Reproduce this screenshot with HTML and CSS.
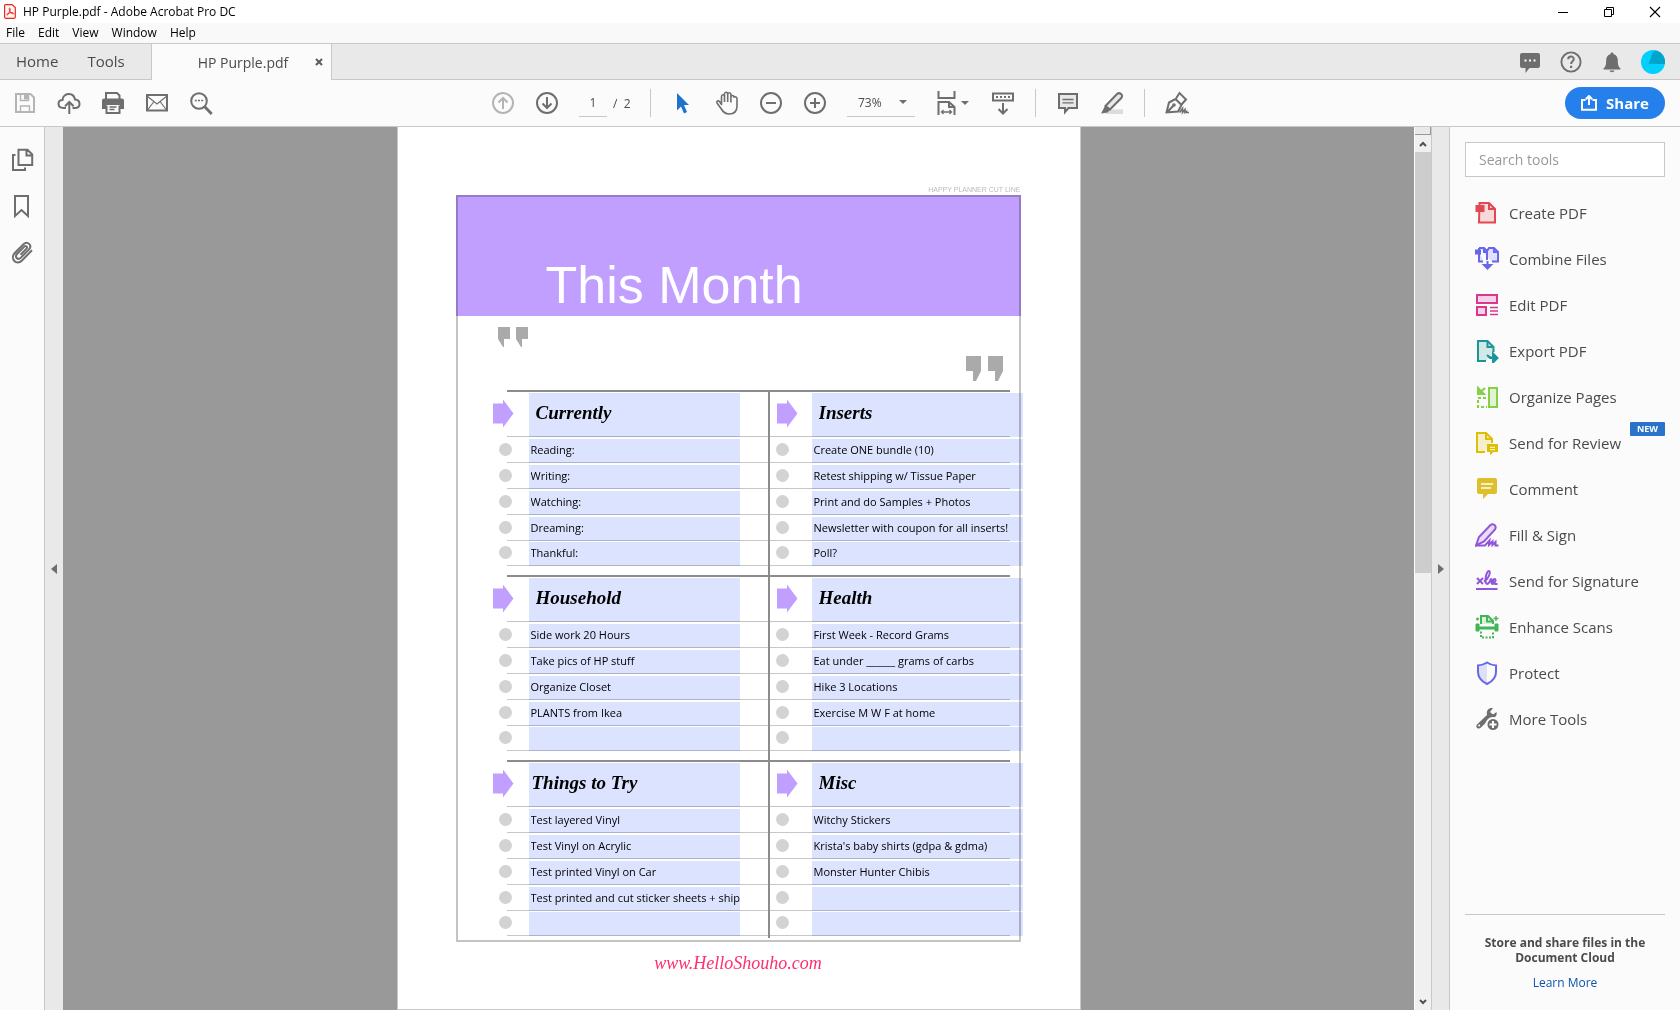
FILE: index.html
```html
<!DOCTYPE html>
<html lang="en">
<head>
<meta charset="utf-8">
<title>HP Purple.pdf - Adobe Acrobat Pro DC</title>
<link rel="stylesheet" href="styles.css">
</head>
<body>
<div class="app">
  <header class="titlebar">
    <svg class="logo" viewBox="0 0 12 15"><path d="M1.500.6h6.600l3.200 3v9.300q0 1.500-1.500 1.500H2.100Q.6 14.400.6 12.900V1.500Q.6.6 1.500.6z" fill="#fff5f5" stroke="#e8291c" stroke-width="1.200"/><path d="M5.700 4.200c-.9 0-.4 2 .4 3.400.9 1.500 2.300 2.400 3.300 2.200 1-.3-.3-1.300-2.400-1.100-2 .2-3.600.9-4.100 1.600-.4.800.7 1 1.400-.2.900-1.400 1.900-3.400 1.900-4.800 0-.7-.2-1.100-.5-1.100z" fill="none" stroke="#e8291c" stroke-width="1"/></svg>
    <h1>HP Purple.pdf - Adobe Acrobat Pro DC</h1>
    <div class="window-buttons">
      <button type="button" aria-label="Minimize"><svg viewBox="0 0 12 12"><path d="M1 6.500h10" stroke="#000"/></svg></button>
      <button type="button" aria-label="Restore"><svg viewBox="0 0 12 12"><path d="M1.500 3.500h7v7h-7zM3.500 3V1.500h7v7H9" fill="none" stroke="#000"/></svg></button>
      <button type="button" aria-label="Close"><svg viewBox="0 0 12 12"><path d="M1 1l10 10M11 1L1 11" stroke="#000" stroke-width="1.100"/></svg></button>
    </div>
  </header>

  <nav class="menubar" aria-label="Menu">
    <button type="button">File</button><button type="button">Edit</button><button type="button">View</button><button type="button">Window</button><button type="button">Help</button>
  </nav>

  <div class="tabs">
    <button type="button" class="tab-link">Home</button>
    <button type="button" class="tab-link">Tools</button>
    <div class="doc-tab"><span>HP Purple.pdf</span><button type="button" aria-label="Close tab"><svg viewBox="0 0 8 8"><path d="M1 1l6 6M7 1L1 7" stroke="#5c5c5c" stroke-width="2"/></svg></button></div>
    <div class="account">
      <button type="button" aria-label="Messages"><svg viewBox="0 0 24 24"><path d="M4 3h16q2 0 2 2v11q0 2-2 2h-8.500L7.500 23v-5H4q-2 0-2-2V5q0-2 2-2z" fill="#6e6e6e"/><path d="M6.500 10.500h2m2.500 0h2m2.500 0h2" stroke="#fff" stroke-width="2"/></svg></button>
      <button type="button" aria-label="Help"><svg viewBox="0 0 24 24"><circle cx="12" cy="12" r="9.600" fill="none" stroke="#6e6e6e" stroke-width="1.900"/><path d="M9.200 9.300c0-3.700 5.600-3.400 5.600-.3 0 2.300-2.700 2.200-2.700 5" fill="none" stroke="#6e6e6e" stroke-width="2"/><path d="M11 15.800h2.200V18H11z" fill="#6e6e6e"/></svg></button>
      <button type="button" aria-label="Notifications"><svg viewBox="0 0 24 24"><path d="M12 2.500c1 0 1.600.7 1.600 1.700 3 .8 4.200 3 4.200 6 0 4.500.6 6.500 2.700 8.300v1h-17v-1c2.100-1.800 2.700-3.800 2.700-8.300 0-3 1.200-5.200 4.200-6 0-1 .6-1.700 1.600-1.700zM9.500 20.500h5c-.6 2.200-4.400 2.200-5 0z" fill="#6e6e6e"/></svg></button>
      <button type="button" aria-label="Account"><svg viewBox="0 0 24 24"><circle cx="12" cy="12" r="12" fill="#00cfff"/><path d="M7.500 14L12 2l3-1.600A12 12 0 0 1 23.900 14z" fill="#00a5cc"/></svg></button>
    </div>
  </div>

  <div class="toolbar">
    <div class="tool-group file-tools">
      <button type="button" class="tool off" aria-label="Save"><svg viewBox="0 0 24 24"><path d="M3 3h14.500L21 6.500V21H3z"/><path d="M7.500 3v6.500h8V3M7.500 21v-6h9v6" stroke-width="1.400"/><path d="M12 4.500h2v3h-2z" class="solid"/></svg></button>
      <button type="button" class="tool" aria-label="Upload"><svg viewBox="0 0 24 24"><path d="M9 17H6.500C-.5 17 .5 8.500 5.500 9 6 1.500 16.500.5 18 8.500c6 .5 6 8.500 0 8.500h-2.500"/><path d="M12.300 23V11.500M8 15.200l4.300-4.300 4.300 4.300"/></svg></button>
      <button type="button" class="tool" aria-label="Print"><svg viewBox="0 0 24 24"><path d="M5 8V2h11l2.500 2.500V8" /><path d="M3 7.500h18q2 0 2 2V18h-4v-4H5v4H1V9.500q0-2 2-2z" class="solid" stroke="none"/><path d="M5.500 14.500V22h13v-7.500"/><path d="M8.500 16h7M8.500 18.500h5" stroke-width="1.300"/></svg></button>
      <button type="button" class="tool" aria-label="Mail"><svg viewBox="0 0 24 24"><path d="M2 4h20v15.500H2z"/><path d="M2 5l10 8 10-8M2.500 19l6.500-8.500M21.500 19L15 10.500" stroke-width="1.200"/></svg></button>
      <button type="button" class="tool" aria-label="Search"><svg viewBox="0 0 24 24"><circle cx="10" cy="10" r="7.800"/><path d="M15.700 15.700L22.700 23" stroke-width="2.800"/><path d="M5.800 9.500h2m1.200 0h2m1.200 0h2" stroke-width="1.700"/></svg></button>
    </div>

    <div class="tool-group">
      <button type="button" class="tool off" aria-label="Previous page"><svg viewBox="0 0 24 24"><circle cx="12" cy="12" r="10"/><path d="M12 18V7M7.500 11.500L12 7l4.500 4.500"/></svg></button>
      <button type="button" class="tool" aria-label="Next page"><svg viewBox="0 0 24 24"><circle cx="12" cy="12" r="10"/><path d="M12 6v11M7.500 12.500L12 17l4.500-4.500"/></svg></button>
      <input class="page-number" aria-label="Page number" value="1">
      <span class="page-total">/&nbsp; 2</span>
      <i class="sep"></i>
      <button type="button" class="tool" aria-label="Select"><svg viewBox="0 0 24 24"><path d="M6 2l12 12h-5l3 7-3 1.500L10 15.500 6 19.500z" fill="#2172cc" stroke="none"/></svg></button>
      <button type="button" class="tool" aria-label="Hand"><svg viewBox="0 0 24 24"><path d="M6.500 14V5.500q0-1.700 1.500-1.700t1.500 1.700V11 3q0-1.700 1.600-1.700T12.700 3v8V3.500q0-1.700 1.600-1.700t1.600 1.700V11.500 6q0-1.500 1.500-1.500T19 6c2.500-.5 3 .500 3 2v7c0 5-3 8-8 8-4 0-6-2-8-5.500L2 12c-.9-1.800 1.300-3 2.500-1.500L7 14" stroke-width="1.600"/></svg></button>
      <button type="button" class="tool" aria-label="Zoom out"><svg viewBox="0 0 24 24"><circle cx="12" cy="12" r="10"/><path d="M7 12h10"/></svg></button>
      <button type="button" class="tool" aria-label="Zoom in"><svg viewBox="0 0 24 24"><circle cx="12" cy="12" r="10"/><path d="M7 12h10M12 7v10"/></svg></button>
      <button type="button" class="zoom-level">73%<span class="caret"></span></button>
      <button type="button" class="tool fit" aria-label="Fit width"><svg viewBox="0 0 24 24"><path d="M3.500 0v7h16V0M3.500 24V11h10.500l5.500 5V24M14 11v5h5.500"/><path d="M6.500 21h10M8.500 19l-2 2 2 2M14.500 19l2 2-2 2" stroke-width="1.300"/></svg><span class="caret"></span></button>
      <button type="button" class="tool scroll" aria-label="Scroll"><svg viewBox="0 0 24 24"><path d="M2 2.500h20v7H2z"/><path d="M5 6h2m2 0h2m2 0h2m2 0h2" stroke-width="1.800"/><path d="M12 12v10M7.500 18l4.500 4.500 4.500-4.500"/></svg></button>
      <i class="sep"></i>
      <button type="button" class="tool" aria-label="Comment"><svg viewBox="0 0 24 24"><path d="M3 3h18v14h-8.500L9 21v-4H3z" fill="#e8e8e8"/><path d="M6.500 8.500h11M6.500 11.800h11" stroke-width="1.300"/></svg></button>
      <button type="button" class="tool highlight" aria-label="Highlight"><svg viewBox="0 0 24 24"><path d="M9 18.500h14V23H5z" fill="#dcdcdc" stroke="none"/><path d="M5.500 15L17 3q2-1.700 4 0t.3 4L10 18.500z" fill="#e8e8e8"/><path d="M5 15l5 4-2.500 2.500L1 22.500z" class="solid" stroke="none"/></svg></button>
      <i class="sep"></i>
      <button type="button" class="tool" aria-label="Sign"><svg viewBox="0 0 24 24"><path d="M1.500 21.500L4 11.500 10.500 8l6 6-3.500 6.500zM2 21.500l6.500-7M11 7.500L14.500 2l6.500 6.500-4.500 5"/><circle cx="9" cy="14" r=".8" class="solid"/><path d="M14.500 21.500l3-4v4l2.500-3v3l1.500-1v1H24" stroke-width="1.600"/></svg></button>
    </div>

    <button type="button" class="share"><svg viewBox="0 0 16 16"><path d="M4.500 5H1v9.800h14V5h-3.500M8 10V1.500M4.800 4.200L8 1l3.200 3.200" fill="none" stroke="#fff" stroke-width="2"/></svg>Share</button>
  </div>

  <div class="workspace">
    <aside class="rail">
      <button type="button" class="tool" aria-label="Page thumbnails"><svg viewBox="0 0 24 24"><path d="M8.500 1.800h9l4.700 4.700V17H8.500zM16.500 1.800v5.700h5.700M5.500 7H3v15h12v-2.500"/></svg></button>
      <button type="button" class="tool" aria-label="Bookmarks"><svg viewBox="0 0 24 24"><path d="M5 2h13v20l-6.500-6L5 22z"/></svg></button>
      <button type="button" class="tool" aria-label="Attachments"><svg viewBox="0 0 24 24"><path d="M10.500 14.800l6-6.200c1.500-1.600-.7-3.500-2.200-2L7 14c-3 3.300 1 6.500 4 3.600l8-8.200c3.600-4-1.500-9-5.500-5.200L4.800 13C-.5 18.700 6.500 26 12 20.500l10-10.300"/></svg></button>
    </aside>
    <button type="button" class="gutter" aria-label="Toggle navigation pane"><span class="arrow-left"></span></button>

    <main class="viewer">
      <article class="page">
        <p class="cut-line">HAPPY PLANNER CUT LINE</p>
        <div class="planner">
          <div class="banner"><h2>This Month</h2></div>
          <div class="quotes">
            <svg viewBox="0 0 30 20"><path d="M0 0h12v12H6v8H5L0 12zM18 0h12v12h-6v8h-1l-5-8z"/></svg>
            <svg class="close-quote" viewBox="0 0 38 25"><path d="M0 0h15v15l-5 10H7V15H0zM22 0h15v15l-5 10h-3V15h-7z"/></svg>
          </div>
          <div class="columns">
            <div class="column left">
              <section><div class="head"><b class="pointer"></b><input aria-label="Section title" value="Currently"></div>
                <div class="row"><b class="dot"></b><input aria-label="Currently 1" value="Reading:"></div>
                <div class="row"><b class="dot"></b><input aria-label="Currently 2" value="Writing:"></div>
                <div class="row"><b class="dot"></b><input aria-label="Currently 3" value="Watching:"></div>
                <div class="row"><b class="dot"></b><input aria-label="Currently 4" value="Dreaming:"></div>
                <div class="row"><b class="dot"></b><input aria-label="Currently 5" value="Thankful:"></div></section>
              <section><div class="head"><b class="pointer"></b><input aria-label="Section title" value="Household"></div>
                <div class="row"><b class="dot"></b><input aria-label="Household 1" value="Side work 20 Hours"></div>
                <div class="row"><b class="dot"></b><input aria-label="Household 2" value="Take pics of HP stuff"></div>
                <div class="row"><b class="dot"></b><input aria-label="Household 3" value="Organize Closet"></div>
                <div class="row"><b class="dot"></b><input aria-label="Household 4" value="PLANTS from Ikea"></div>
                <div class="row"><b class="dot"></b><input aria-label="Household 5" value=""></div></section>
              <section><div class="head flush"><b class="pointer"></b><input aria-label="Section title" value="Things to Try"></div>
                <div class="row"><b class="dot"></b><input aria-label="Things to Try 1" value="Test layered Vinyl"></div>
                <div class="row"><b class="dot"></b><input aria-label="Things to Try 2" value="Test Vinyl on Acrylic"></div>
                <div class="row"><b class="dot"></b><input aria-label="Things to Try 3" value="Test printed Vinyl on Car"></div>
                <div class="row"><b class="dot"></b><input aria-label="Things to Try 4" value="Test printed and cut sticker sheets + ship"></div>
                <div class="row"><b class="dot"></b><input aria-label="Things to Try 5" value=""></div></section>
            </div>
            <div class="column right">
              <section><div class="head"><b class="pointer"></b><input aria-label="Section title" value="Inserts"></div>
                <div class="row"><b class="dot"></b><input aria-label="Inserts 1" value="Create ONE bundle (10)"></div>
                <div class="row"><b class="dot"></b><input aria-label="Inserts 2" value="Retest shipping w/ Tissue Paper"></div>
                <div class="row"><b class="dot"></b><input aria-label="Inserts 3" value="Print and do Samples + Photos"></div>
                <div class="row"><b class="dot"></b><input aria-label="Inserts 4" value="Newsletter with coupon for all inserts!"></div>
                <div class="row"><b class="dot"></b><input aria-label="Inserts 5" value="Poll?"></div></section>
              <section><div class="head"><b class="pointer"></b><input aria-label="Section title" value="Health"></div>
                <div class="row"><b class="dot"></b><input aria-label="Health 1" value="First Week - Record Grams"></div>
                <div class="row"><b class="dot"></b><input aria-label="Health 2" value="Eat under ______ grams of carbs"></div>
                <div class="row"><b class="dot"></b><input aria-label="Health 3" value="Hike 3 Locations"></div>
                <div class="row"><b class="dot"></b><input aria-label="Health 4" value="Exercise M W F at home"></div>
                <div class="row"><b class="dot"></b><input aria-label="Health 5" value=""></div></section>
              <section><div class="head"><b class="pointer"></b><input aria-label="Section title" value="Misc"></div>
                <div class="row"><b class="dot"></b><input aria-label="Misc 1" value="Witchy Stickers"></div>
                <div class="row"><b class="dot"></b><input aria-label="Misc 2" value="Krista's baby shirts (gdpa &amp; gdma)"></div>
                <div class="row"><b class="dot"></b><input aria-label="Misc 3" value="Monster Hunter Chibis"></div>
                <div class="row"><b class="dot"></b><input aria-label="Misc 4" value=""></div>
                <div class="row"><b class="dot"></b><input aria-label="Misc 5" value=""></div></section>
            </div>
          </div>
        </div>
        <a class="site" href="#">www.HelloShouho.com</a>
      </article>
    </main>

    <div class="scrollbar">
      <div class="split"></div>
      <button type="button" aria-label="Scroll up"><svg viewBox="0 0 8 6"><path d="M1 5l3-3 3 3" fill="none" stroke="#505050" stroke-width="2"/></svg></button>
      <div class="track"><div class="thumb"></div></div>
      <button type="button" aria-label="Scroll down"><svg viewBox="0 0 8 6"><path d="M1 1l3 3 3-3" fill="none" stroke="#505050" stroke-width="2"/></svg></button>
    </div>
    <button type="button" class="gutter" aria-label="Toggle tools pane"><span class="arrow-right"></span></button>

    <aside class="tools">
      <input class="search" type="search" aria-label="Search tools" placeholder="Search tools">
      <ul>
        <li><button type="button"><svg viewBox="0 0 24 24" stroke="#e34850"><path d="M4.500 2H14l6 6v13.500H4z" fill="#f6d9da"/><path d="M14 2v6h6"/><path d="M1.500 5h7v5h-7z" fill="#e34850"/></svg>Create PDF</button></li>
        <li><button type="button"><svg viewBox="0 0 24 24" stroke="#6767ec"><path d="M4 1h5l3 3 2-3h5l4 4v9.500h-6M4 1v13.500h4M12 4v9M9 1v4h3M19 1v4h4" fill="#dfdfff"/><path d="M1 3.500h4v3H1z" fill="#6767ec"/><path d="M12.500 14v7M9 18l3.500 3.500L16 18z" fill="#6767ec"/></svg>Combine Files</button></li>
        <li><button type="button"><svg viewBox="0 0 24 24" stroke="#d83790"><path d="M2 2h20v8H2zM2 14h9v8H2z" fill="#f6d3e6"/><path d="M15 14.500h8M15 18h8M15 21.500h8" stroke-width="1.300"/></svg>Edit PDF</button></li>
        <li><button type="button"><svg viewBox="0 0 24 24" stroke="#1b959a"><path d="M11 22H3V2h9.500l6 6v5" fill="#d3e9e8"/><path d="M12.500 2v6h6"/><path d="M12 16l3 3h6M18 14.500l4.500 4.500-4.500 4.500z" fill="#1b959a"/></svg>Export PDF</button></li>
        <li><button type="button"><svg viewBox="0 0 24 24" stroke="#85d044"><path d="M14 3h8v19h-8z" fill="#e2f3d5"/><path d="M11 13H3v9h9" stroke-dasharray="3 2"/><path d="M10 3L5 7.500M3 3v6h6z" fill="#85d044"/></svg>Organize Pages</button></li>
        <li><button type="button"><svg viewBox="0 0 24 24" stroke="#dfbf03"><path d="M10 21H2V2h9l6 6v4" fill="#f5efce"/><path d="M11 2v6h6"/><path d="M13 14h9v6h-4l-2 2v-2h-3z" fill="#dfbf03"/><path d="M15 16.300h5M15 18.700h5" stroke="#fff" stroke-width="1"/></svg>Send for Review</button><span class="new">NEW</span></li>
        <li><button type="button"><svg viewBox="0 0 24 24"><path d="M4 1h16q2 0 2 2v12q0 2-2 2h-7l-5 5v-5H4q-2 0-2-2V3q0-2 2-2z" fill="#dfbf2b"/><path d="M6 7h12M6 11h10" stroke="#fff" stroke-width="1.600"/></svg>Comment</button></li>
        <li><button type="button"><svg viewBox="0 0 24 24" stroke="#9256d9"><path d="M1 22.500L4 14 15.500 2q2-1.500 4 0t.5 4.500L9 18.500z" fill="#eadcf8"/><path d="M1 22.500h9l4.500-5-.5 4.500 3.500-3.500v3.500l3-3v3.500h3"/></svg>Fill &amp; Sign</button></li>
        <li><button type="button"><svg viewBox="0 0 24 24" stroke="#9256d9"><path d="M1 20h21.500M2 9l6 6M8 9l-6 6M9 12.500C14 10 16 2.500 14 2c-3-.5-5 13-2 13s3-5 4-5-.5 4.500 1.500 5c3-.5 4-5 2-5s-2 5 1 5h2"/></svg>Send for Signature</button></li>
        <li><button type="button"><svg viewBox="0 0 24 24" stroke="#44b556"><path d="M6 9V1h7l5 5v3" fill="#d8f0dc"/><path d="M12 1v5.500h6"/><path d="M1 9h3v3h16V9h3v7h-3v-2H4v2H1z" fill="#44b556" stroke-width="1"/><path d="M6 16.500v6h12v-6" stroke-dasharray="2 1.500"/><path d="M21 1v5M18.500 3.500h5M1 4h3M2.500 2.500v3" stroke-width="1.300"/></svg>Enhance Scans</button></li>
        <li><button type="button"><svg viewBox="0 0 24 24" stroke="#6767ec"><path d="M12 1v21.500C5 19 3 16 3 11V4c4 0 6-1 9-3z" fill="#dfdff5" stroke="none"/><path d="M12 1.500c3 2 5 2.800 9 3V11c0 5.500-2.500 9-9 12C5.500 20 3 16.500 3 11V4.500c4-.2 6-1 9-3z"/></svg>Protect</button></li>
        <li><button type="button"><svg viewBox="0 0 24 24"><path d="M18 1l-3 4 3 2.500L21.500 5c1 4-2 7-6 6L6 20.500c-3 3-6.500-1-3.500-3.500L12 8c-1-5 2-7.500 6-7z" fill="#6e6e6e"/><circle cx="4.200" cy="18.500" r="1" fill="#fff"/><circle cx="18" cy="17.500" r="6.500" fill="#6e6e6e" stroke="#fbfbfb"/><path d="M18 14v7M14.500 17.500h7" stroke="#fff" stroke-width="2"/></svg>More Tools</button></li>
      </ul>
      <footer>
        <p>Store and share files in the Document Cloud</p>
        <a href="#">Learn More</a>
      </footer>
    </aside>
  </div>
</div>
</body>
</html>
```
FILE: styles.css
```css
* { box-sizing: border-box; }
body { margin: 0; background: #fff; color: #4b4b4b; font-family: "Open Sans", "Noto Sans", sans-serif; font-size: 14px; }
button { margin: 0; padding: 0; border: 0; background: none; color: inherit; font: inherit; }
input { min-width: 0; margin: 0; border: 0; border-radius: 0; font: inherit; }
h1, h2, p, ul { margin: 0; padding: 0; font-weight: normal; }
ul { list-style: none; }
svg { display: block; flex: none; }

.app { display: flex; flex-direction: column; min-height: 100vh; padding-bottom: 22px; }

.titlebar { display: flex; align-items: center; height: 23px; padding-left: 4px; color: #000; }
.logo { width: 12px; height: 15px; margin-right: 7px; }
.titlebar h1 { font-size: 12px; line-height: 16px; }
.window-buttons { display: flex; margin-left: auto; padding-right: 2px; }
.window-buttons button { display: grid; place-items: center; width: 46px; height: 20px; }
.window-buttons svg { width: 12px; height: 12px; }

.menubar { display: flex; gap: 13px; height: 20px; padding-left: 6px; background: #f9f9f9; color: #000; font-size: 12px; line-height: 20px; }

.tabs { display: flex; height: 37px; border-top: 1px solid #c8c8c8; background: #e9e9e9; box-shadow: inset 0 -1px #c8c8c8; }
.tab-link { padding: 0 0 2px 16px; font-size: 15px; }
.tab-link + .tab-link { padding-left: 29px; }
.doc-tab { display: flex; align-items: center; width: 181px; margin-left: 26px; padding: 0 8px 0 46px; border: solid #c8c8c8; border-width: 0 1px; background: #fbfbfb; }
.doc-tab button { margin-left: auto; }
.doc-tab svg { width: 8px; height: 8px; }
.account { display: flex; align-items: center; gap: 17px; margin-left: auto; padding-right: 15px; }
.account svg { width: 24px; height: 24px; }

.toolbar { display: grid; grid-template-columns: 1fr auto 1fr; align-items: center; height: 47px; padding: 0 15px; border-bottom: 1px solid #c8c8c8; background: #fbfbfb; }
.tool-group { display: flex; align-items: center; height: 46px; }
.file-tools { margin-left: -12px; }
.tool { display: flex; align-items: center; justify-content: center; width: 44px; height: 44px; }
.tool svg { width: 24px; height: 24px; fill: none; stroke: #6e6e6e; stroke-width: 2; }
.tool .solid { fill: #6e6e6e; }
.off svg { stroke: #b4b4b4; }
.off .solid { fill: #b4b4b4; }
.page-number { align-self: flex-start; width: 28px; height: 37px; margin-left: 10px; padding: 8px 0 0; border-bottom: 1px solid #c8c8c8; background: none; color: #4b4b4b; font-size: 12px; text-align: center; }
.page-total { width: 43px; padding-left: 6px; font-size: 12px; }
.sep { width: 1px; height: 28px; margin-right: 10px; background: #c8c8c8; }
.zoom-level { display: flex; align-items: center; align-self: flex-start; justify-content: space-between; width: 68px; height: 37px; margin-left: 10px; padding: 8px 8px 0 11px; border-bottom: 1px solid #c8c8c8; font-size: 12px; }
.caret { border: solid transparent; border-width: 4px 4px 0; border-top-color: #6e6e6e; }
.fit { gap: 2px; width: 66px; padding-left: 8px; }
.scroll, .highlight { margin-right: 10px; }
.share { display: flex; align-items: center; justify-content: center; justify-self: end; gap: 9px; width: 100px; height: 32px; border-radius: 16px; background: #2680eb; color: #fff; font-size: 15px; font-weight: bold; line-height: 28px; }
.share svg { width: 16px; height: 16px; }

.workspace { display: flex; flex: 1; }
.rail { display: flex; flex: none; flex-direction: column; gap: 2px; width: 45px; padding-top: 11px; border-right: 1px solid #c8c8c8; background: #fbfbfb; }
.gutter { display: flex; flex: none; align-items: center; justify-content: center; width: 18px; background: #e9e9e9; }
.arrow-left, .arrow-right { border: solid transparent; border-width: 5px 6px; }
.arrow-left { margin-left: -6px; border-right-color: #6e6e6e; }
.arrow-right { margin-left: 6px; border-left-color: #6e6e6e; }
.scrollbar + .gutter { width: 19px; border: solid #c8c8c8; border-width: 0 1px; }

.viewer { flex: 1; display: flex; justify-content: center; background: #999; }
.page { display: flex; flex-direction: column; width: 684px; padding: 58px 59px 0 58px; border: 1px solid #c8c8c8; border-top: 0; background: #fff; }
.cut-line { color: #bbb; font: 7px/10px "Liberation Sans", sans-serif; text-align: right; }
.planner { border: 2px solid #c4c4c4; }
.banner { height: 121px; margin: -2px -2px 0; padding-left: 88px; border: 2px solid #957bc6; border-bottom: 0; overflow: hidden; background: #c09fff; color: #fff; }
.banner h2 { margin-top: 58px; font: 52px/60px "Liberation Sans", sans-serif; white-space: nowrap; }
.quotes { display: flex; justify-content: space-between; height: 74px; padding: 11px 15px 0 40px; }
.quotes svg { width: 30px; height: 20px; fill: #aaa; }
.quotes .close-quote { width: 38px; height: 25px; margin-top: 29px; }
.columns { display: flex; height: 550px; padding-left: 35px; }
.column { flex: none; display: flex; flex-direction: column; gap: 9px; height: 548px; }
.left { width: 277px; border-right: 2px solid #8c8c8c; }
.right { width: 253px; }
.head, .row { display: flex; align-items: center; background-repeat: no-repeat; }
.head { height: 47px; background-image: linear-gradient(#8c8c8c, #8c8c8c), linear-gradient(#c4c4c4, #c4c4c4); }
.row { height: 26px; background-image: linear-gradient(#c8c8c8, #c8c8c8); }
.row:last-child { height: 25px; }
.left .head { background-size: 264px 2px, 264px 1px; background-position: 14px 0, 14px 100%; }
.right .head { background-size: 240px 2px, 240px 1px; background-position: 0 0, 0 100%; }
.left .row { background-size: 264px 1px; background-position: 14px 100%; }
.right .row { background-size: 240px 1px; background-position: 0 100%; }
.pointer { width: 21px; height: 28px; margin-right: 15px; background: #c09fff; clip-path: polygon(0 14%, 50% 14%, 50% 0, 100% 50%, 50% 100%, 50% 86%, 0 86%); }
.right .pointer { margin: 0 14px 0 7px; }
.dot { width: 13px; height: 13px; margin: 0 17px 2px 6px; border-radius: 50%; background: #d3d3d3; }
.right .dot { margin: 0 23px 2px 6px; }
.head input, .row input { align-self: flex-end; width: 211px; height: 24px; padding: 0 0 3px 2px; background: #dce3ff; color: #000; font-size: 11px; mix-blend-mode: multiply; }
.head input { height: 44px; padding: 0 0 4px 7px; font: italic bold 19px "Liberation Serif", serif; }
.head.flush input { padding-left: 3px; }
.site { align-self: center; margin-top: 9px; color: #ff2e6e; font: italic 18px/24px "Liberation Serif", serif; text-decoration: none; }

.scrollbar { display: flex; flex: none; flex-direction: column; width: 17px; border-left: 1px solid #fff; background: #f0f0f0; }
.split { height: 8px; border: solid #999; border-width: 0 1px 1px 0; background: #e9e9e9; }
.scrollbar button { display: grid; place-items: center; height: 17px; }
.scrollbar svg { width: 8px; height: 6px; }
.track { flex: 1; }
.thumb { height: 50%; background: #cdcdcd; }

.tools { display: flex; flex: none; flex-direction: column; width: 230px; padding: 15px 15px 0; background: #fbfbfb; }
.search { width: 100%; height: 35px; padding: 0 13px; border: 1px solid #c8c8c8; background: #fff; }
.search::placeholder { color: #999; }
.tools ul { padding-top: 13px; }
.tools li { display: flex; align-items: center; justify-content: space-between; height: 46px; }
.tools li button { display: flex; align-items: center; gap: 10px; padding-left: 10px; font-size: 15px; white-space: nowrap; }
.tools li svg { width: 24px; height: 24px; fill: none; stroke-width: 2; }
.new { width: 35px; margin: 0 0 29px -8px; border-radius: 1px; background: #2a73c9; color: #fff; font-size: 9px; font-weight: bold; line-height: 14px; text-align: center; }
.tools footer { margin-top: auto; padding: 20px 12px 0; height: 96px; border-top: 1px solid #c8c8c8; font-size: 12px; text-align: center; }
.tools footer p { font-weight: bold; line-height: 15px; }
.tools footer a { display: block; margin-top: 9px; color: #0d54ae; line-height: 18px; text-decoration: none; }
```
